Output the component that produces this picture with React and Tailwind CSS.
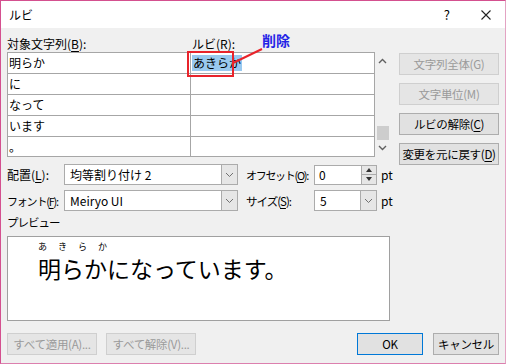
import React from "react";

const rows = [
  ["明らか", "あきらか"],
  ["に", ""],
  ["なって", ""],
  ["います", ""],
  ["。", ""],
];

function U({ children }) {
  return <span className="underline underline-offset-[2px]">{children}</span>;
}

function Btn({ children, disabled, primary, className = "" }) {
  let look = "border-[#adadad] bg-[#e1e1e1] text-black";
  if (disabled) look = "border-[#cfcfcf] bg-[#e5e5e5] text-[#9a9a9a]";
  if (primary) look = "border-[#0078d7] bg-[#e1e1e1] text-black";
  return (
    <div
      className={`flex h-[22px] shrink-0 items-center justify-center whitespace-nowrap border text-[11.5px] leading-[14px] tracking-[-0.3px] ${look} ${className}`}
    >
      {children}
    </div>
  );
}

function Chevron({ up }) {
  return (
    <svg width="9" height="6" viewBox="0 0 9 6">
      <path
        d={up ? "M1 5 L4.5 1.5 L8 5" : "M1 1 L4.5 4.5 L8 1"}
        fill="none"
        stroke="#606060"
        strokeWidth="1.4"
      />
    </svg>
  );
}

function Select({ value, className = "" }) {
  return (
    <div className={`flex h-[21px] shrink-0 border border-[#ababab] bg-white ${className}`}>
      <div className="flex flex-1 items-center pl-[5px] text-[12px]">{value}</div>
      <div className="flex w-[16px] items-center justify-center border-l border-[#ababab] bg-[#e6e6e6]">
        <svg width="9" height="6" viewBox="0 0 9 6">
          <path d="M1 1 L4.5 4.5 L8 1" fill="none" stroke="#707070" strokeWidth="1" />
        </svg>
      </div>
    </div>
  );
}

export default function App() {
  return (
    <div className="relative flex h-[364px] w-[506px] flex-col overflow-hidden whitespace-nowrap border border-[#d4508f] border-r-[#e3a3c3] border-b-[#dc7fae] bg-[#f0f0f0] font-['Noto_Sans_CJK_JP',sans-serif] text-[12px] leading-[16px] text-black">
      {/* title bar */}
      <div className="flex h-[27px] shrink-0 items-center bg-white pl-[8px] pr-[14px] text-[12px]">
        <span>ルビ</span>
        <span className="ml-auto mr-[31px] text-[13px]">?</span>
        <svg width="10" height="10" viewBox="0 0 10 10">
          <path d="M0.5 0.5 L9.5 9.5 M9.5 0.5 L0.5 9.5" stroke="#222" strokeWidth="1.1" />
        </svg>
      </div>

      <div className="flex flex-col px-[6px] pt-[8px]">
        {/* table + buttons */}
        <div className="flex h-[121px] items-start">
          <div className="flex w-[383px] flex-col">
            <div className="flex h-[16px] items-center">
              <span className="w-[185px]">
                対象文字列(<U>B</U>):
              </span>
              <span>
                ルビ(<U>R</U>):
              </span>
            </div>
            <div className="flex">
              <div className="flex h-[105px] w-[368px] flex-col border border-[#a6a6a6] bg-white">
                {rows.map(([a, b], i) => (
                  <div
                    key={i}
                    className={`grid grid-cols-[183px_1fr] ${i < rows.length - 1 ? "h-[21px] border-b border-[#a6a6a6]" : "flex-1"}`}
                  >
                    <div className="flex items-center border-r border-[#a6a6a6] pl-[1px]">{a}</div>
                    <div className="flex items-center pl-[1px]">
                      {b && <span className="bg-[#99c9ef] px-[1px] leading-[16px]">{b}</span>}
                    </div>
                  </div>
                ))}
              </div>
              <div className="flex h-[105px] w-[15px] flex-col items-center pt-[6px]">
                <Chevron up />
                <div className="flex-1" />
                <div className="h-[14px] w-[12px] bg-[#cdcdcd]" />
                <div className="mb-[6px] mt-[5px]">
                  <Chevron />
                </div>
              </div>
            </div>
          </div>
          <div className="ml-[9px] flex w-[100px] flex-col gap-[8px] pt-[17px]">
            <Btn disabled>文字列全体(G)</Btn>
            <Btn disabled>文字単位(M)</Btn>
            <Btn>
              ルビの解除(<U>C</U>)
            </Btn>
            <Btn>
              変更を元に戻す(<U>D</U>)
            </Btn>
          </div>
        </div>

        {/* options */}
        <div className="mt-[7px] flex flex-col gap-[5px]">
          <div className="flex h-[21px] items-center">
            <span className="w-[57px] shrink-0">
              配置(<U>L</U>):
            </span>
            <Select value="均等割り付け 2" className="w-[174px]" />
            <span className="ml-[8px] w-[68px] shrink-0 text-[11px] tracking-[-1.3px]">
              オフセット(<U>O</U>):
            </span>
            <div className="flex h-[20px] w-[63px] shrink-0 border border-[#ababab] bg-white">
              <div className="flex flex-1 items-center pl-[4px]">0</div>
              <div className="flex w-[15px] flex-col border-l border-[#ababab] bg-[#e6e6e6]">
                <div className="flex flex-1 items-center justify-center border-b border-[#ababab]">
                  <svg width="6" height="4" viewBox="0 0 6 4">
                    <path d="M0 4 L3 0 L6 4 Z" fill="#333" />
                  </svg>
                </div>
                <div className="flex flex-1 items-center justify-center">
                  <svg width="6" height="4" viewBox="0 0 6 4">
                    <path d="M0 0 L3 4 L6 0 Z" fill="#333" />
                  </svg>
                </div>
              </div>
            </div>
            <span className="ml-[4px]">pt</span>
          </div>
          <div className="flex h-[21px] items-center">
            <span className="w-[57px] shrink-0 text-[11px] tracking-[-1.2px]">
              フォント(<U>F</U>):
            </span>
            <Select value="Meiryo UI" className="w-[174px]" />
            <span className="ml-[8px] w-[68px] shrink-0 text-[11.5px] tracking-[-1px]">
              サイズ(<U>S</U>):
            </span>
            <Select value="5" className="w-[63px]" />
            <span className="ml-[4px]">pt</span>
          </div>
        </div>

        {/* preview */}
        <div className="mt-[3px] flex h-[16px] items-center text-[11.5px] tracking-[-1px]">プレビュー</div>
        <div className="mt-[6px] h-[85px] w-[383px] shrink-0 border border-[#a0a0a0] bg-white pl-[30px] pt-[5px]">
          <div className="flex items-end text-[23px] leading-[27px]">
            <div className="flex flex-col">
              <div className="mb-[3px] flex justify-between text-[9px] leading-[10px]">
                <span>あ</span>
                <span>き</span>
                <span>ら</span>
                <span>か</span>
              </div>
              <span>明らか</span>
            </div>
            <span>になっています。</span>
          </div>
        </div>

        {/* bottom buttons */}
        <div className="mt-[12px] flex">
          <Btn disabled className="w-[90px]">
            すべて適用(A)...
          </Btn>
          <Btn disabled className="ml-[9px] w-[90px]">
            すべて解除(V)...
          </Btn>
          <Btn primary className="ml-auto w-[66px]">
            OK
          </Btn>
          <Btn className="ml-[10px] w-[66px]">キャンセル</Btn>
        </div>
      </div>

      {/* annotation */}
      <div className="absolute left-[186px] top-[50px] h-[26px] w-[47px] border-2 border-[#e8242b]" />
      <svg className="absolute left-[231px] top-[46px]" width="32" height="18" viewBox="0 0 32 18">
        <path d="M1 16 L30 2" stroke="#e8242b" strokeWidth="2" />
      </svg>
      <div className="absolute left-[261px] top-[31px] text-[14px] font-bold leading-[16px] text-[#2424e6]">
        削除
      </div>
    </div>
  );
}
